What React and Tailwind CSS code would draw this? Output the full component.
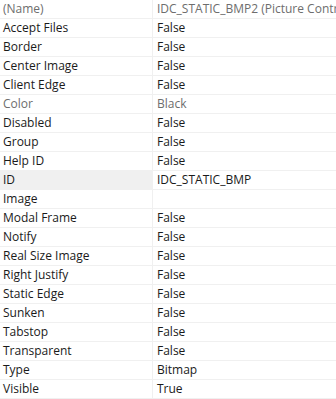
import React from "react";

const rows = [
  ["(Name)", "IDC_STATIC_BMP2 (Picture Control)", "gray"],
  ["Accept Files", "False"],
  ["Border", "False"],
  ["Center Image", "False"],
  ["Client Edge", "False"],
  ["Color", "Black", "gray"],
  ["Disabled", "False"],
  ["Group", "False"],
  ["Help ID", "False"],
  ["ID", "IDC_STATIC_BMP", "sel"],
  ["Image", ""],
  ["Modal Frame", "False"],
  ["Notify", "False"],
  ["Real Size Image", "False"],
  ["Right Justify", "False"],
  ["Static Edge", "False"],
  ["Sunken", "False"],
  ["Tabstop", "False"],
  ["Transparent", "False"],
  ["Type", "Bitmap"],
  ["Visible", "True"],
];

export default function App() {
  return (
    <div
      className="w-[336px] h-[399px] bg-white overflow-hidden text-[12px] leading-[18px]"
      style={{ fontFamily: '"Open Sans", "Noto Sans", sans-serif' }}
    >
      {rows.map(([name, value, kind], i) => {
        const gray = kind === "gray";
        const sel = kind === "sel";
        return (
          <div key={i} className="flex h-[19px] border-b border-[#f0f0f0]">
            <div
              className={
                "w-[152px] shrink-0 pl-[3px] whitespace-nowrap overflow-hidden " +
                (sel ? "bg-[#f0f0f0] " : "") +
                (gray ? "text-[#6d6d6d]" : "text-[#1a1a1a]")
              }
            >
              {name}
            </div>
            <div className="w-px shrink-0 bg-[#f0f0f0]" />
            <div
              className={
                "flex-1 pl-[4px] whitespace-nowrap overflow-hidden " +
                (gray ? "text-[#6d6d6d]" : "text-[#1a1a1a]")
              }
            >
              {value}
            </div>
          </div>
        );
      })}
    </div>
  );
}
